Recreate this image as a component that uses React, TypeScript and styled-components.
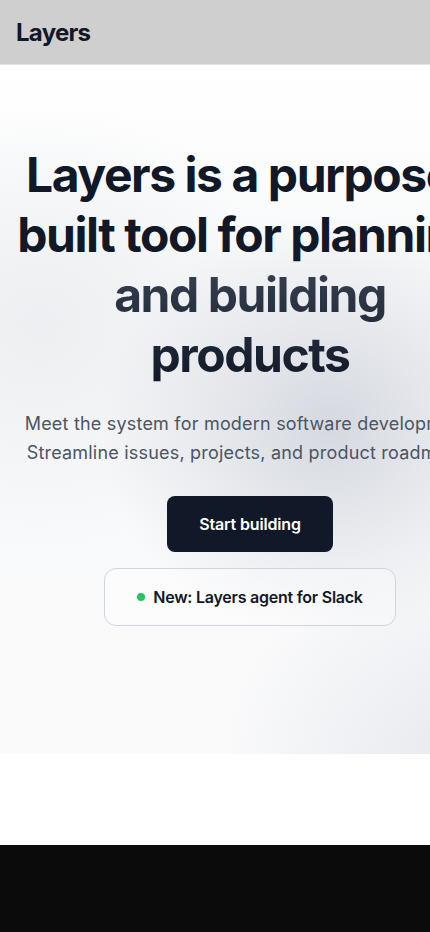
import React from "react";
import styled, { createGlobalStyle } from "styled-components";

const Global = createGlobalStyle`
  html, body { margin: 0; padding: 0; background: #ffffff; }
  body { font-family: Inter, "Noto Sans", "Liberation Sans", sans-serif; -webkit-font-smoothing: antialiased; }
  * { box-sizing: border-box; }
`;

const Page = styled.div`
  display: flex;
  flex-direction: column;
  width: 100%;
  overflow: hidden;
`;

const Header = styled.header`
  height: 65px;
  display: flex;
  align-items: center;
  padding: 0 16px;
  background: #cfcfcf;
  border-bottom: 1px solid #e6e6e6;
`;

const Brand = styled.div`
  font-size: 24px;
  font-weight: 700;
  color: #111827;
  letter-spacing: -0.03em;
  margin-top: 1px;
`;

const Hero = styled.section`
  display: flex;
  padding: 80px 0 128px;
  background:
    radial-gradient(ellipse 230px 210px at 330px 360px, rgba(204, 208, 216, 0.8), rgba(204, 208, 216, 0) 100%),
    radial-gradient(ellipse 250px 230px at 470px 710px, rgba(228, 231, 236, 0.95), rgba(228, 231, 236, 0) 100%),
    radial-gradient(ellipse 240px 220px at 40px 260px, rgba(234, 236, 239, 0.8), rgba(234, 236, 239, 0) 100%),
    linear-gradient(180deg, #ffffff 0%, #f8f9fa 30%, #fafafb 100%);
`;

const Content = styled.div`
  flex: 0 0 500px;
  width: 500px;
  display: flex;
  flex-direction: column;
  align-items: center;
  text-align: center;
`;

const Title = styled.h1`
  margin: 0;
  font-size: 48px;
  line-height: 60px;
  font-weight: 700;
  letter-spacing: -0.03em;
  color: #111827;
  white-space: nowrap;
`;

const TitleAccent = styled.span`
  display: block;
  background: linear-gradient(180deg, #374151 0%, #1f2937 60%, #111827 100%);
  -webkit-background-clip: text;
  background-clip: text;
  color: transparent;
`;

const Lead = styled.p`
  margin: 24px 0 0;
  font-size: 18px;
  line-height: 29px;
  letter-spacing: 0.2px;
  color: #4b5563;
  white-space: nowrap;
`;

const Primary = styled.button`
  margin-top: 29px;
  height: 56px;
  padding: 0 32px;
  border: none;
  border-radius: 8px;
  background: #111827;
  color: #ffffff;
  font-family: inherit;
  font-size: 16px;
  font-weight: 600;
  letter-spacing: -0.01em;
`;

const Announce = styled.div`
  margin-top: 16px;
  width: 292px;
  height: 58px;
  display: flex;
  align-items: center;
  justify-content: center;
  gap: 8px;
  border: 1px solid #d1d5db;
  border-radius: 12px;
  background: rgba(255, 255, 255, 0.35);
  font-size: 16px;
  font-weight: 600;
  letter-spacing: -0.015em;
  color: #111827;
`;

const Dot = styled.span`
  width: 8px;
  height: 8px;
  border-radius: 50%;
  background: #22c55e;
`;

const Spacer = styled.div`
  height: 91px;
  background: #ffffff;
`;

const Footer = styled.footer`
  height: 120px;
  background: #0b0b0b;
`;

export default function App() {
  return (
    <>
      <Global />
      <Page>
        <Header>
          <Brand>Layers</Brand>
        </Header>
        <Hero>
          <Content>
            <Title>
              Layers is a purpose-
              <br />
              built tool for planning
              <TitleAccent>
                and building
                <br />
                products
              </TitleAccent>
            </Title>
            <Lead>
              Meet the system for modern software development.
              <br />
              Streamline issues, projects, and product roadmaps.
            </Lead>
            <Primary>Start building</Primary>
            <Announce>
              <Dot />
              New: Layers agent for Slack
            </Announce>
          </Content>
        </Hero>
        <Spacer />
        <Footer />
      </Page>
    </>
  );
}
